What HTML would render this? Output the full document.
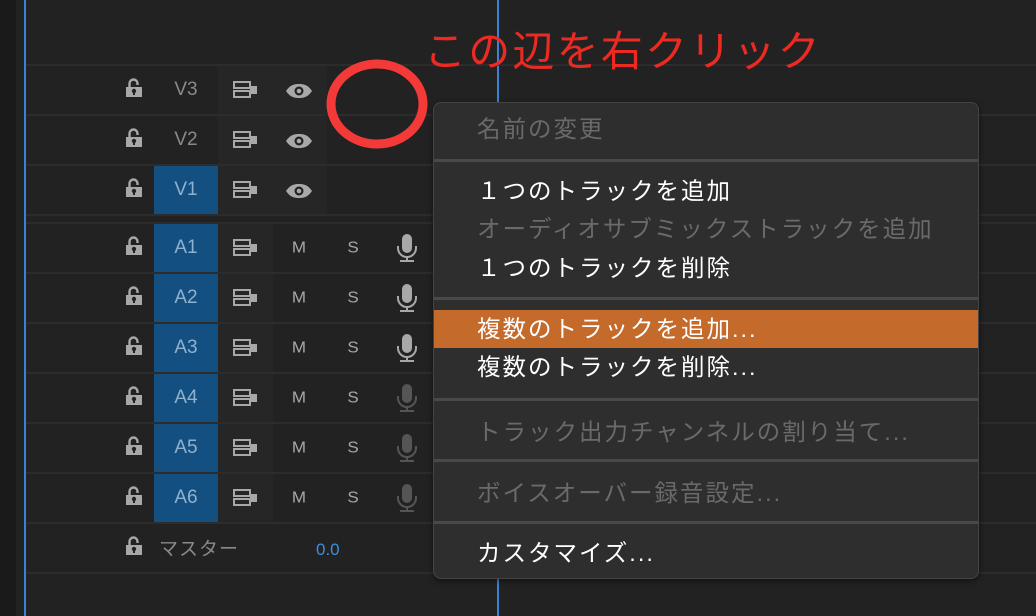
<!DOCTYPE html>
<html><head><meta charset="utf-8"><style>
*{margin:0;padding:0;box-sizing:border-box}
body{width:1036px;height:616px;background:#222;position:relative;overflow:hidden;font-family:"Liberation Sans","Noto Sans CJK JP",sans-serif}
.a{position:absolute}
.row{position:absolute;left:26px;width:1010px;height:50px;border-top:2px solid #2c2c2c}
.c2{position:absolute;left:218px;width:109px;height:48px;background:#262626}
.blue{position:absolute;left:154px;width:64px;height:48px;background:#135081;color:#8fb1d0;font-size:19px;display:flex;align-items:center;justify-content:center}
.lbl{position:absolute;left:154px;width:64px;height:48px;color:#8a8a8a;font-size:19px;display:flex;align-items:center;justify-content:center}
.ic{position:absolute}
.ms{position:absolute;color:#a8a8a8;font-size:17px;width:30px;text-align:center;transform:scaleY(0.9)}
.menu{left:433px;top:102px;width:546px;height:477px;background:#2e2e2e;border:1px solid #444;border-radius:8px;box-shadow:0 2px 6px rgba(0,0,0,.5);overflow:hidden}
.mi{position:absolute;left:43px;font-size:23.5px;letter-spacing:2px;color:#fff;white-space:nowrap;line-height:30px}
.dis{color:#6a6a6a}
.sep{position:absolute;left:0;width:100%;height:3px;background:#494949}
</style></head><body>
<svg width="0" height="0" style="position:absolute">
<defs>
<symbol id="lock" viewBox="0 0 18 20"><path d="M4.5 9V5.5a4 4 0 0 1 8 0V7" fill="none" stroke="#a8a8a8" stroke-width="2.4"/><rect x="1" y="9" width="16" height="10" fill="#a8a8a8"/><circle cx="9" cy="13" r="2.2" fill="#222"/><rect x="8" y="13" width="2" height="4" fill="#222"/></symbol>
<symbol id="tgt" viewBox="0 0 26 18"><rect x="1" y="1" width="16" height="6" fill="none" stroke="#a8a8a8" stroke-width="2"/><rect x="1" y="10" width="16" height="6" fill="none" stroke="#a8a8a8" stroke-width="2"/><rect x="17" y="5" width="7" height="8" fill="#a8a8a8"/></symbol>
<symbol id="eye" viewBox="0 0 28 16"><path d="M1 8C5 2 9 1 14 1s9 1 13 7c-4 6-8 7-13 7S5 14 1 8z" fill="#a8a8a8"/><circle cx="14" cy="8" r="4.5" fill="#222"/><circle cx="14" cy="8" r="2.3" fill="#a8a8a8"/></symbol>
<symbol id="mic" viewBox="0 0 20 28"><rect x="5" y="0" width="10" height="19" rx="5"/><path d="M1 12v2a9 9 0 0 0 18 0v-2" fill="none" stroke="currentColor" stroke-width="2"/><path d="M10 23v3M3 27h14" stroke="currentColor" stroke-width="2"/></symbol>
</defs></svg>

<div class="a" style="left:0;top:0;width:16px;height:616px;background:#1a1a1a"></div>
<div class="a" style="left:24px;top:0;width:2px;height:616px;background:#3b82d6"></div>
<div class="a" style="left:497px;top:0;width:2px;height:616px;background:#3b82d6"></div>

<div class="row" style="top:64px"></div>
<div class="row" style="top:114px"></div>
<div class="row" style="top:164px"></div>
<div class="row" style="top:214px;height:8px"></div>
<div class="row" style="top:222px"></div>
<div class="row" style="top:272px"></div>
<div class="row" style="top:322px"></div>
<div class="row" style="top:372px"></div>
<div class="row" style="top:422px"></div>
<div class="row" style="top:472px"></div>
<div class="row" style="top:522px"></div>
<div class="row" style="top:572px;height:2px"></div>

<div class="c2" style="top:66px"></div><div class="c2" style="top:116px"></div><div class="c2" style="top:166px"></div>
<div class="c2" style="top:224px;width:55px"></div><div class="c2" style="top:274px;width:55px"></div><div class="c2" style="top:324px;width:55px"></div><div class="c2" style="top:374px;width:55px"></div><div class="c2" style="top:424px;width:55px"></div><div class="c2" style="top:474px;width:55px"></div>

<div class="lbl" style="top:66px">V3</div>
<div class="lbl" style="top:116px">V2</div>
<div class="blue" style="top:166px">V1</div>
<div class="blue" style="top:224px">A1</div>
<div class="blue" style="top:274px">A2</div>
<div class="blue" style="top:324px">A3</div>
<div class="blue" style="top:374px">A4</div>
<div class="blue" style="top:424px">A5</div>
<div class="blue" style="top:474px">A6</div>

<svg class="ic" style="left:125px;top:78px" width="18" height="20"><use href="#lock"/></svg>
<svg class="ic" style="left:125px;top:128px" width="18" height="20"><use href="#lock"/></svg>
<svg class="ic" style="left:125px;top:178px" width="18" height="20"><use href="#lock"/></svg>
<svg class="ic" style="left:125px;top:236px" width="18" height="20"><use href="#lock"/></svg>
<svg class="ic" style="left:125px;top:286px" width="18" height="20"><use href="#lock"/></svg>
<svg class="ic" style="left:125px;top:336px" width="18" height="20"><use href="#lock"/></svg>
<svg class="ic" style="left:125px;top:386px" width="18" height="20"><use href="#lock"/></svg>
<svg class="ic" style="left:125px;top:436px" width="18" height="20"><use href="#lock"/></svg>
<svg class="ic" style="left:125px;top:486px" width="18" height="20"><use href="#lock"/></svg>
<svg class="ic" style="left:125px;top:536px" width="18" height="20"><use href="#lock"/></svg>

<svg class="ic" style="left:233px;top:81px" width="26" height="18"><use href="#tgt"/></svg>
<svg class="ic" style="left:233px;top:131px" width="26" height="18"><use href="#tgt"/></svg>
<svg class="ic" style="left:233px;top:181px" width="26" height="18"><use href="#tgt"/></svg>
<svg class="ic" style="left:233px;top:239px" width="26" height="18"><use href="#tgt"/></svg>
<svg class="ic" style="left:233px;top:289px" width="26" height="18"><use href="#tgt"/></svg>
<svg class="ic" style="left:233px;top:339px" width="26" height="18"><use href="#tgt"/></svg>
<svg class="ic" style="left:233px;top:389px" width="26" height="18"><use href="#tgt"/></svg>
<svg class="ic" style="left:233px;top:439px" width="26" height="18"><use href="#tgt"/></svg>
<svg class="ic" style="left:233px;top:489px" width="26" height="18"><use href="#tgt"/></svg>

<svg class="ic" style="left:285px;top:83px" width="28" height="16"><use href="#eye"/></svg>
<svg class="ic" style="left:285px;top:133px" width="28" height="16"><use href="#eye"/></svg>
<svg class="ic" style="left:285px;top:183px" width="28" height="16"><use href="#eye"/></svg>

<div class="ms" style="left:284px;top:238px">M</div><div class="ms" style="left:338px;top:238px">S</div>
<div class="ms" style="left:284px;top:288px">M</div><div class="ms" style="left:338px;top:288px">S</div>
<div class="ms" style="left:284px;top:338px">M</div><div class="ms" style="left:338px;top:338px">S</div>
<div class="ms" style="left:284px;top:388px">M</div><div class="ms" style="left:338px;top:388px">S</div>
<div class="ms" style="left:284px;top:438px">M</div><div class="ms" style="left:338px;top:438px">S</div>
<div class="ms" style="left:284px;top:488px">M</div><div class="ms" style="left:338px;top:488px">S</div>

<svg class="ic" style="left:397px;top:234px;color:#a8a8a8;fill:#a8a8a8" width="20" height="28"><use href="#mic"/></svg>
<svg class="ic" style="left:397px;top:284px;color:#a8a8a8;fill:#a8a8a8" width="20" height="28"><use href="#mic"/></svg>
<svg class="ic" style="left:397px;top:334px;color:#a8a8a8;fill:#a8a8a8" width="20" height="28"><use href="#mic"/></svg>
<svg class="ic" style="left:397px;top:384px;color:#555;fill:#555" width="20" height="28"><use href="#mic"/></svg>
<svg class="ic" style="left:397px;top:434px;color:#555;fill:#555" width="20" height="28"><use href="#mic"/></svg>
<svg class="ic" style="left:397px;top:484px;color:#555;fill:#555" width="20" height="28"><use href="#mic"/></svg>

<div class="a" style="left:159px;top:534px;color:#8a8a8a;font-size:19px;letter-spacing:1px">マスター</div>
<div class="a" style="left:316px;top:540px;color:#3b8fe0;font-size:17px">0.0</div>

<div class="a" style="left:424px;top:24px;color:#ec2a22;font-size:42px;letter-spacing:2.2px;white-space:nowrap;line-height:56px">この辺を右クリック</div>
<svg class="a" style="left:320px;top:55px" width="120" height="100"><ellipse cx="57" cy="49" rx="46" ry="40" fill="none" stroke="#f43a38" stroke-width="9"/></svg>

<div class="a menu">
  <div class="mi dis" style="top:11px">名前の変更</div>
  <div class="sep" style="top:56px"></div>
  <div class="mi" style="top:73px">１つのトラックを追加</div>
  <div class="mi dis" style="top:111px">オーディオサブミックストラックを追加</div>
  <div class="mi" style="top:150px">１つのトラックを削除</div>
  <div class="sep" style="top:194px"></div>
  <div class="a" style="left:0;top:207px;width:100%;height:38px;background:#c46a2b"></div>
  <div class="mi" style="top:211px">複数のトラックを追加...</div>
  <div class="mi" style="top:249px">複数のトラックを削除...</div>
  <div class="sep" style="top:295px"></div>
  <div class="mi dis" style="top:314px">トラック出力チャンネルの割り当て...</div>
  <div class="sep" style="top:356px"></div>
  <div class="mi dis" style="top:375px">ボイスオーバー録音設定...</div>
  <div class="sep" style="top:418px"></div>
  <div class="mi" style="top:435px">カスタマイズ...</div>
</div>
</body></html>
